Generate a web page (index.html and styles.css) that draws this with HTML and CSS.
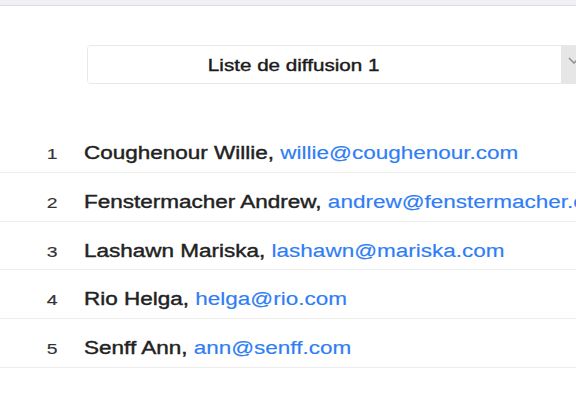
FILE: index.html
```html
<!DOCTYPE html>
<html lang="fr">
<head>
<meta charset="utf-8">
<title>Liste de diffusion</title>
<link rel="stylesheet" href="styles.css">
</head>
<body>
<div class="topbar"></div>
<div class="picker">
  <div class="select">
    <div class="select-label"><span class="wide wide-center">Liste de diffusion 1</span></div>
    <div class="select-btn">
      <svg class="chev" width="12" height="7" viewBox="0 0 12 7"><path d="M1 1 L6 6 L11 1" fill="none" stroke="#8a8a8a" stroke-width="1.4"/></svg>
    </div>
  </div>
</div>
<ul class="list">
  <li class="row"><span class="num"><span class="wide wide-right">1</span></span><span class="name wide">Coughenour Willie, <a class="mail">willie@coughenour.com</a></span></li>
  <li class="row"><span class="num"><span class="wide wide-right">2</span></span><span class="name wide">Fenstermacher Andrew, <a class="mail">andrew@fenstermacher.com</a></span></li>
  <li class="row"><span class="num"><span class="wide wide-right">3</span></span><span class="name wide">Lashawn Mariska, <a class="mail">lashawn@mariska.com</a></span></li>
  <li class="row"><span class="num"><span class="wide wide-right">4</span></span><span class="name wide">Rio Helga, <a class="mail">helga@rio.com</a></span></li>
  <li class="row"><span class="num"><span class="wide wide-right">5</span></span><span class="name wide">Senff Ann, <a class="mail">ann@senff.com</a></span></li>
</ul>
</body>
</html>
```
FILE: styles.css
```css
html, body {
  margin: 0;
  padding: 0;
  background: #ffffff;
  overflow: hidden;
  font-family: "Liberation Sans", Arial, Helvetica, sans-serif;
}
body {
  width: 576px;
  height: 404px;
}
.topbar {
  height: 5px;
  background: #f1f0f5;
  border-bottom: 1px solid #dedde2;
}
.wide {
  display: inline-block;
  transform: scaleX(1.25);
  transform-origin: 0 50%;
}
.wide-center {
  transform-origin: 50% 50%;
}
.wide-right {
  transform-origin: 100% 50%;
}
.picker {
  padding-top: 39px;
  padding-left: 87px;
  width: 600px;
}
.select {
  display: flex;
  width: 520px;
  height: 39px;
  border: 1px solid #e8e8e8;
  border-radius: 4px;
  box-sizing: border-box;
  overflow: hidden;
}
.select-label {
  width: 473px;
  box-sizing: border-box;
  padding-right: 61px;
  text-align: center;
  font-size: 16.5px;
  -webkit-text-stroke: 0.4px #1a1a1a;
  color: #1a1a1a;
  line-height: 38px;
  background: #fff;
}
.select-btn {
  flex: 1;
  background: #e6e6e6;
  padding-left: 7px;
  padding-top: 11px;
}
.chev {
  display: block;
}
.list {
  list-style: none;
  margin: 0;
  padding: 0;
  margin-top: 40px;
  width: 700px;
}
.row {
  display: flex;
  align-items: baseline;
  height: 48.75px;
  box-sizing: border-box;
  padding-top: 19px;
  border-bottom: 1px solid #ececec;
  white-space: nowrap;
}
.num {
  width: 84px;
  padding-right: 26px;
  box-sizing: border-box;
  text-align: right;
  font-size: 15.5px;
  color: #333;
  -webkit-text-stroke: 0.15px #333;
}
.name {
  font-size: 18px;
  color: #222;
  -webkit-text-stroke: 0.4px #222;
}
.mail {
  color: #2f7df6;
  text-decoration: none;
  -webkit-text-stroke: 0.15px #2f7df6;
}
```
